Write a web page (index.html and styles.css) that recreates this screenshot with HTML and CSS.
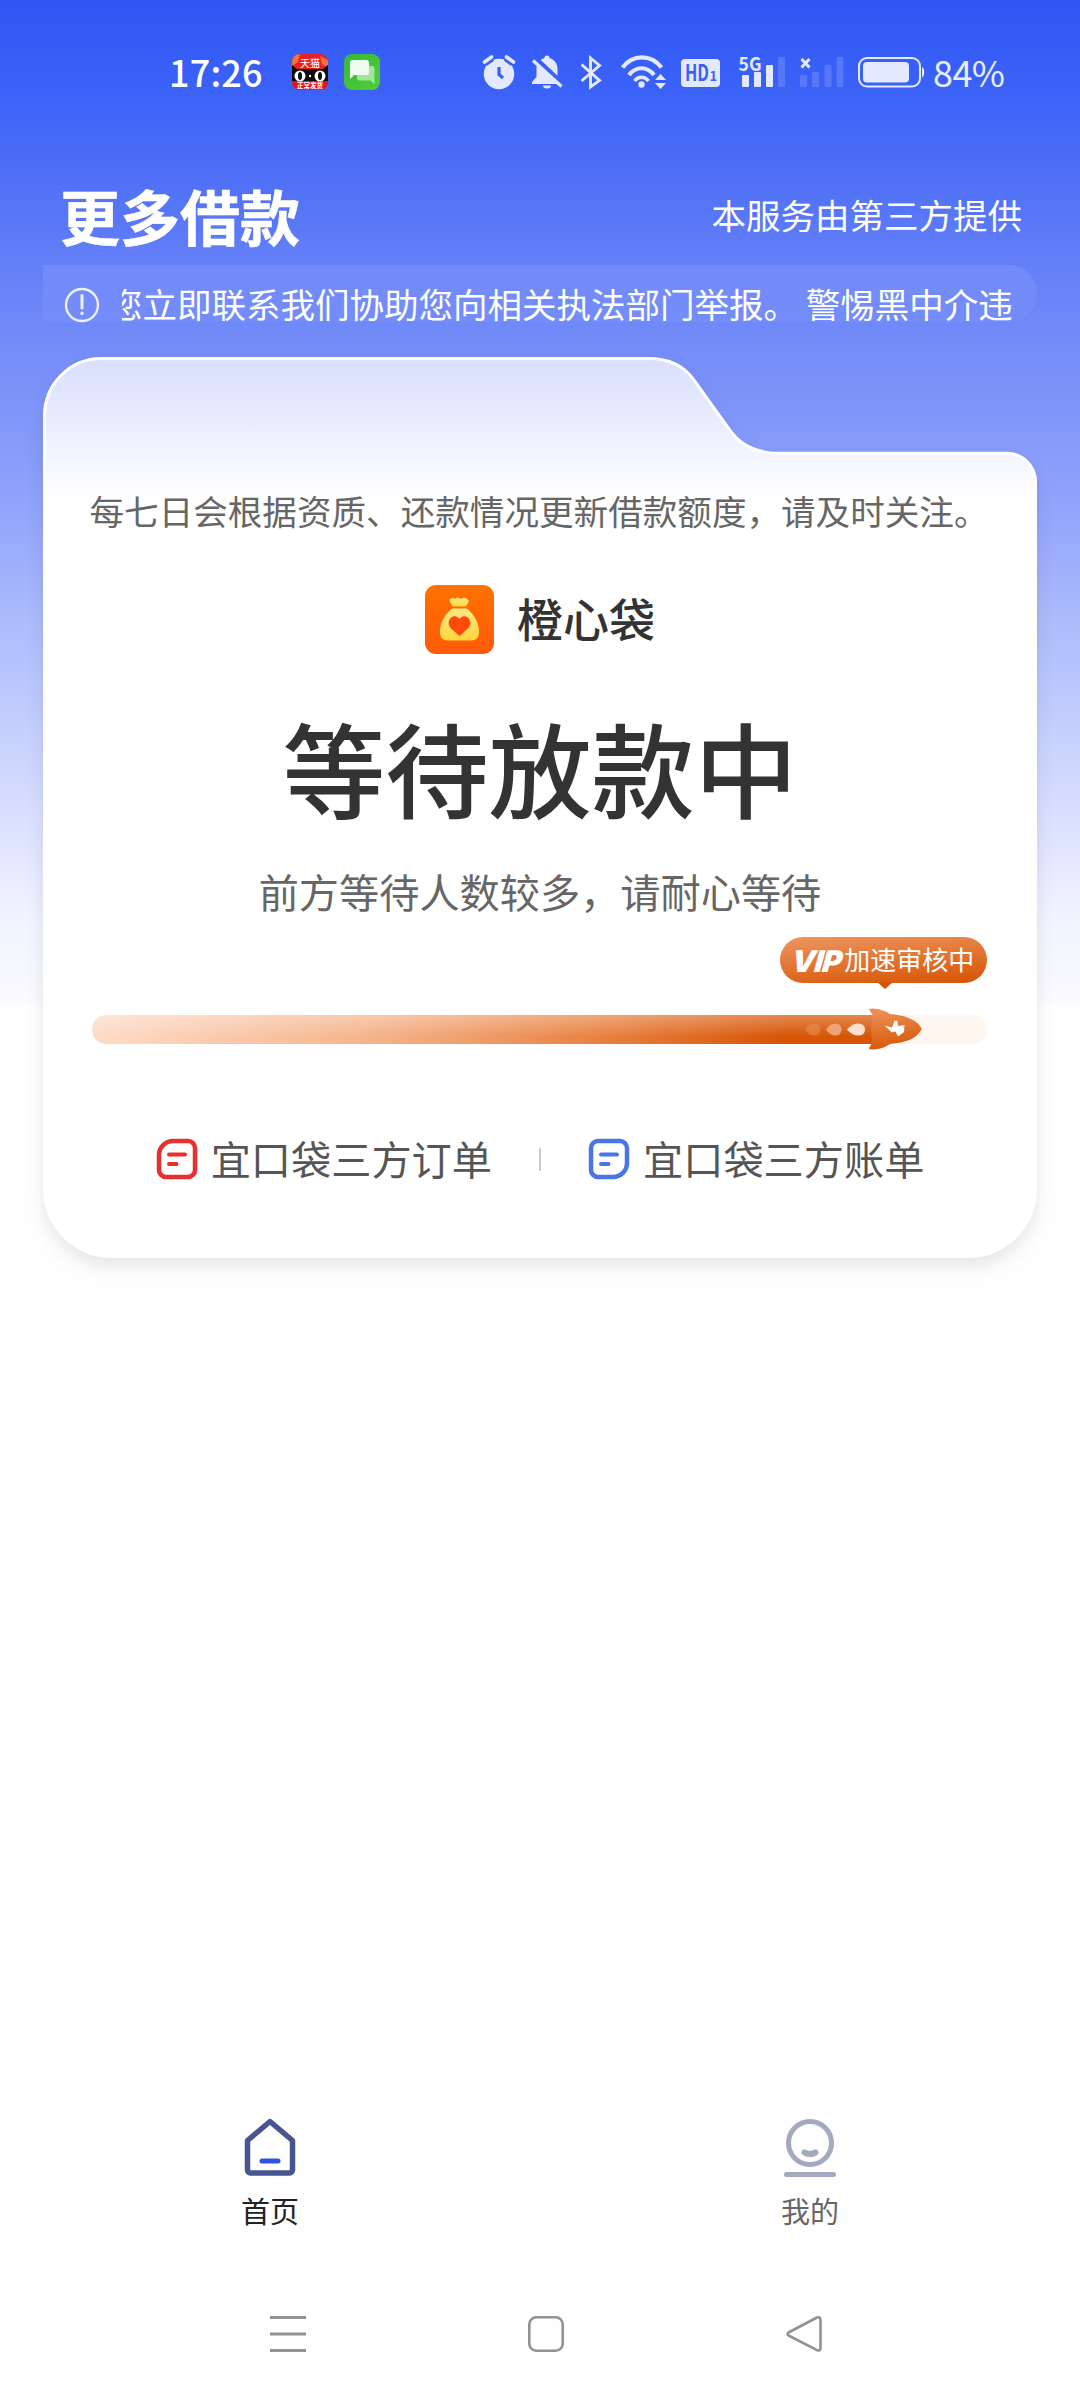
FILE: index.html
```html
<!DOCTYPE html>
<html lang="zh-CN">
<head>
<meta charset="utf-8">
<title>更多借款</title>
<link rel="stylesheet" href="styles.css">
</head>
<body>
<div class="screen">
  <header class="status">
    <span class="clock">17:26</span>
    <svg class="app-tmall" width="36" height="36" viewBox="0 0 36 36">
      <defs><clipPath id="tm"><rect width="36" height="36" rx="8"/></clipPath></defs>
      <g clip-path="url(#tm)">
        <rect width="36" height="36" fill="#e8231f"/>
        <path d="M0 0h8l-2 8-6 4zM28 2l8 4v8l-6-4z" fill="#f5703c"/>
        <path d="M0 11l5 4h26l5-4v16H0z" fill="#120b0c"/>
        <rect y="27" width="36" height="9" fill="#e3131a"/>
        <ellipse cx="8" cy="22" rx="5.500" ry="5.500" fill="#fff"/><ellipse cx="28" cy="22" rx="5.500" ry="5.500" fill="#fff"/>
        <ellipse cx="8" cy="22" rx="2" ry="4" fill="#111"/><ellipse cx="28" cy="22" rx="2" ry="4" fill="#111"/>
        <circle cx="18" cy="22" r="1.200" fill="#fff"/>
        <text x="18" y="13" text-anchor="middle" font-size="10" fill="#fff">天猫</text>
        <text x="18" y="34" text-anchor="middle" font-size="6.500" font-weight="700" fill="#fff">正常发货</text>
      </g>
    </svg>
    <svg class="app-msg" width="36" height="36" viewBox="0 0 36 36">
      <defs><linearGradient id="gm" x1="0" y1="0" x2="1" y2="1"><stop offset="0" stop-color="#35b83a"/><stop offset="1" stop-color="#4fcf35"/></linearGradient></defs>
      <rect width="36" height="36" rx="8" fill="url(#gm)"/>
      <path d="M16 12h12a2.500 2.500 0 0 1 2.500 2.500V30l-4-3.500H15.500a2.500 2.500 0 0 1-2.500-2.500v-7z" fill="#a4e3a0"/>
      <path d="M8.500 6h14A2.500 2.500 0 0 1 25 8.500v10a2.500 2.500 0 0 1-2.500 2.500H10l-4 4V8.500A2.500 2.500 0 0 1 8.500 6z" fill="#eefbee"/>
    </svg>
    <svg class="sys" width="446" height="40" viewBox="480 52 446 40" fill="#e3eaff">
      <g>
        <circle cx="499" cy="74" r="15.200"/>
        <path d="M485 63l7-5M513 63l-7-5" stroke="#3a60f6" stroke-width="7"/>
        <path d="M484.500 62l7-5M513.500 62l-7-5" stroke="#e3eaff" stroke-width="3.600" stroke-linecap="round"/>
        <path d="M499 67v7.500l4 3.500" fill="none" stroke="#3a60f6" stroke-width="3.200"/>
      </g>
      <g>
        <path d="M547 55.500c1.600 0 2.500 1 2.500 2.500 5 1.500 8 5.500 8 11v8l4.500 5v2h-30v-2l4.500-5v-8c0-5.500 3-9.500 8-11 0-1.500.9-2.500 2.500-2.500z"/>
        <path d="M543 85.500h8a4 3 0 0 1-8 0z"/>
        <path d="M535 58l30 28" stroke="#3a60f6" stroke-width="5"/>
        <path d="M533 60.500l28.500 26" stroke="#e3eaff" stroke-width="3.200"/>
      </g>
      <path d="M581.500 64.500l18 16L590.500 87V58l9 7.500-18 15.500" fill="none" stroke="#e3eaff" stroke-width="2.900"/>
      <g fill="none" stroke="#e3eaff" stroke-width="4.200">
        <path d="M622.500 67.500c10.500-13.500 28.500-13.500 39 0"/><path d="M629 75c7-9 18-9 25 0"/><path d="M634.500 81c4-5 10-5 14 0" stroke-width="3.600"/>
      </g>
      <circle cx="641.500" cy="84.500" r="3.200"/>
      <path d="M655 80l5.500-6 5.500 6zM655 83h11l-5.500 6z"/>
      <rect x="681" y="59" width="39" height="28" rx="4"/>
      <text x="685" y="81" font-size="22" font-weight="700" textLength="24" lengthAdjust="spacingAndGlyphs" fill="#3a60f6">HD</text>
      <text x="709.500" y="81" font-size="13" font-weight="700" fill="#3a60f6">1</text>
      <text x="738.500" y="70.500" font-size="19" font-weight="700" textLength="23" lengthAdjust="spacingAndGlyphs">5G</text>
      <rect x="742" y="75" width="7" height="12" rx="1"/><rect x="754" y="72" width="7" height="15" rx="1"/><rect x="766" y="65" width="7" height="22" rx="1"/>
      <g opacity=".17"><rect x="778" y="57" width="7" height="30" rx="1"/><rect x="800" y="75" width="7" height="12" rx="1"/><rect x="812" y="72" width="7" height="15" rx="1"/><rect x="824.500" y="65" width="7" height="22" rx="1"/><rect x="836.500" y="57" width="7" height="30" rx="1"/></g>
      <path d="M801.500 59l8 8.500M809.500 59l-8 8.500" stroke="#e3eaff" stroke-width="3"/>
      <rect x="859" y="58" width="61" height="28.500" rx="8" fill="none" stroke="#e3eaff" stroke-width="2"/>
      <rect x="863" y="62" width="46" height="20.500" rx="4"/>
      <path d="M922 67c3 .8 3 9.500 0 10.500z"/>
    </svg>
    <span class="pct">84%</span>
  </header>

  <div class="head">
    <h1>更多借款</h1>
    <span class="provider">本服务由第三方提供</span>
  </div>

  <div class="notice">
    <svg width="36" height="36" viewBox="0 0 36 36" fill="none" stroke="#eef1ff"><circle cx="18" cy="18" r="16" stroke-width="2.300"/><path d="M18 8.500v12.500" stroke-width="3" stroke-linecap="round"/><path d="M18 26v.6" stroke-width="3.200" stroke-linecap="round"/></svg>
    <div class="marquee"><span>您立即联系我们协助您向相关执法部门举报。 警惕黑中介违</span></div>
  </div>

  <main class="card">
    <svg class="card-bg" width="994" height="901" viewBox="0 0 994 901">
      <defs><linearGradient id="cg" gradientUnits="userSpaceOnUse" x1="0" y1="0" x2="0" y2="140"><stop offset="0" stop-color="#d9dffd"/><stop offset=".5" stop-color="#ebeefe"/><stop offset="1" stop-color="#fff"/></linearGradient></defs>
      <path d="M1.500 58.500A57 57 0 0 1 58.500 1.500H606C626 1.500 641 9 651 23L689 76C700 90 716 96.300 737 96.300H964A28.500 28.500 0 0 1 992.500 124.500V832A67.500 67.500 0 0 1 925 899.500H69A67.500 67.500 0 0 1 1.500 832Z" fill="url(#cg)" stroke="#fff" stroke-width="3"/>
    </svg>
    <p class="tip">每七日会根据资质、还款情况更新借款额度，请及时关注。</p>
    <div class="brand">
      <svg width="69" height="69" viewBox="0 0 69 69">
        <defs><linearGradient id="bo" x1="0" y1="0" x2="0" y2="1"><stop offset="0" stop-color="#ff7300"/><stop offset="1" stop-color="#ff5a08"/></linearGradient><linearGradient id="by" x1="0" y1="0" x2="0" y2="1"><stop offset="0" stop-color="#ffe884"/><stop offset="1" stop-color="#ffd53c"/></linearGradient></defs>
        <rect width="69" height="69" rx="11" fill="url(#bo)"/>
        <path d="M24.500 14.500q3-2.500 5.500-.5 2.500-3 6 0 4-3 8 1.500-.5 3-3.500 6H28q-3.500-4-3.500-7z" fill="url(#by)"/>
        <path d="M27.500 23.500h14c6 4 13 13 12.500 24-.2 5-2.500 8-8 8H23c-5.500 0-7.800-3-8-8-.5-11 6.500-20 12.500-24z" fill="url(#by)"/>
        <path d="M34.500 51L25.500 43c-6-8 4-16 9-9 5-7 15 1 9 9z" fill="#ff4a0c"/>
      </svg>
      <span>橙心袋</span>
    </div>
    <h2>等待放款中</h2>
    <p class="queue">前方等待人数较多，请耐心等待</p>
    <div class="progress">
      <div class="fill"></div>
      <svg class="rocket" width="120" height="42" viewBox="0 0 120 42">
        <defs><linearGradient id="rk" x1="0" y1="0" x2=".2" y2="1"><stop offset="0" stop-color="#ef9560"/><stop offset="1" stop-color="#d85a08"/></linearGradient></defs>
        <path d="M3 21.500q4-6 9-6 6.500 0 6.500 6t-6.500 6q-5 0-9-6z" fill="#e8905a" opacity=".55"/>
        <path d="M24 21.500q4-6 9-6 6.500 0 6.500 6t-6.500 6q-5 0-9-6z" fill="#efa277"/>
        <path d="M45 21.500q5-6 11-6 7 0 7 6t-7 6q-6 0-11-6z" fill="#fde0cd"/>
        <path d="M67 1.500Q67 .5 71 .5q10 .5 17 5.500 24 2 31 13.500 1 1.500 0 3-7 11.500-31 13.500-7 5-17 5.500-4 0-4-1.500l3.500-6q-3-13 .5-26.500-2-3-4-6z" fill="url(#rk)"/>
        <path d="M82.500 17.500L90 19.500 92.500 12.700H95.500L96 18 102.500 17 102 24 96 28.500 93.500 23.500 90 24.500z" fill="#fff"/>
      </svg>
      <div class="badge"><b>VIP</b>加速审核中</div>
    </div>
    <nav class="links">
      <a><svg width="42" height="42" viewBox="0 0 42 42" fill="none" stroke="#e83030"><path d="M17 3h15a7 7 0 0 1 7 7v22a7 7 0 0 1-7 7H10a7 7 0 0 1-7-7V17A14 14 0 0 1 17 3z" stroke-width="4.500"/><path d="M13 16.500h16M13 26h7.500" stroke-width="4" stroke-linecap="round"/></svg><span>宜口袋三方订单</span></a>
      <i></i>
      <a><svg width="42" height="42" viewBox="0 0 42 42" fill="none" stroke="#4a74e8"><path d="M10 3h22a7 7 0 0 1 7 7v15a14 14 0 0 1-14 14H10a7 7 0 0 1-7-7V10a7 7 0 0 1 7-7z" stroke-width="4.500"/><path d="M13 16.500h16M13 26h7.500" stroke-width="4" stroke-linecap="round"/></svg><span>宜口袋三方账单</span></a>
    </nav>
  </main>

  <nav class="tabs">
    <a class="on"><svg width="60" height="60" viewBox="0 0 60 60" fill="none"><path d="M30 3.500L52.500 22.500V52a3 3 0 0 1-3 3H10.500a3 3 0 0 1-3-3V22.500z" stroke="#475590" stroke-width="5.500" stroke-linejoin="round"/><path d="M22 43h16" stroke="#2f52e0" stroke-width="5" stroke-linecap="round"/></svg><span>首页</span></a>
    <a><svg width="60" height="60" viewBox="0 0 60 60" fill="none" stroke="#a3a9bf" stroke-width="5" stroke-linecap="round"><circle cx="30" cy="25" r="21.500"/><path d="M24.500 34.500q5.500 3 11 0" stroke-width="6"/><path d="M6.500 56.500h47"/></svg><span>我的</span></a>
  </nav>
  <footer class="sysnav">
    <svg width="38" height="38" viewBox="0 0 38 38" stroke="#929292" stroke-width="3"><path d="M1 2.500h36M1 19h36M1 35.500h36"/></svg>
    <svg width="38" height="38" viewBox="0 0 38 38" fill="none" stroke="#929292" stroke-width="2.600"><rect x="2.300" y="2.300" width="33.400" height="33.400" rx="7"/></svg>
    <svg width="38" height="38" viewBox="0 0 38 38" fill="none" stroke="#929292" stroke-width="2.600" stroke-linejoin="round"><path d="M3.500 17.500L32 2.500Q35.500 1.500 35.500 5V33Q35.500 36.500 32 35.200L3.500 20.500Q1.500 19 3.500 17.500z"/></svg>
  </footer>
</div>
</body>
</html>
```
FILE: styles.css
```css
* { box-sizing: border-box; margin: 0; padding: 0; }
body {
  width: 1080px;
  height: 2400px;
  overflow: hidden;
  background: #fefefe;
  font-family: "Noto Sans CJK SC", sans-serif;
}
svg { display: block; flex: none; }
.screen {
  position: relative;
  z-index: 0;
  display: flex;
  flex-direction: column;
  height: 2400px;
  background: linear-gradient(180deg, #2f56f4 0, #3b62f7 90px, #4b6df6 160px, #6480f8 265px, #758df8 350px, #90a2fb 500px, #b0bffc 640px, #d6dcfe 800px, #f1f4fe 920px, #fafaff 1004px, #fefefe 1005px) no-repeat;
}
.status {
  display: flex;
  align-items: center;
  height: 144px;
  padding-left: 169px;
  color: #fff;
}
.clock, .pct { font-size: 36px; line-height: 40px; font-weight: 500; margin-top: -3px; }
.clock { width: 123px; letter-spacing: .2px; }
.app-msg { margin-left: 16px; }
.sys { margin-left: 100px; }
.pct { margin-left: 7px; font-weight: 400; color: #e9eeff; letter-spacing: -.6px; }
.head {
  display: flex;
  justify-content: space-between;
  align-items: center;
  height: 121px;
  padding: 20px 58px 0 60px;
  color: #fff;
}
.head h1 { font-size: 60px; line-height: 60px; font-weight: 700; -webkit-text-stroke: .6px #fff; }
.provider { margin-top: -1px; font-size: 34.500px; line-height: 40px; }
.notice {
  display: flex;
  align-items: center;
  width: 994px;
  height: 57px;
  margin-left: 43px;
  padding: 22px 23px 0 21px;
  border-radius: 0 28px 28px 0;
  background: linear-gradient(180deg, rgba(255,255,255,.09), rgba(255,255,255,.03));
}
.marquee {
  width: 893px;
  height: 44px;
  margin-left: 22px;
  overflow: hidden;
  white-space: nowrap;
  color: #fff;
  font-size: 34.500px;
  line-height: 40px;
}
.marquee span { margin-left: -14px; }
.card {
  position: relative;
  display: flex;
  flex-direction: column;
  align-items: center;
  width: 994px;
  height: 901px;
  margin: 35px 0 0 43px;
}
.card-bg { position: absolute; inset: 0; z-index: -1; overflow: visible; filter: drop-shadow(0 9px 8px rgba(0,0,0,.09)); }
.tip { margin: 133px 2px 0 0; font-size: 34.600px; line-height: 40px; color: #666; white-space: nowrap; }
.brand { display: flex; align-items: center; gap: 23px; height: 69px; margin-top: 55px; font-size: 46px; line-height: 60px; font-weight: 500; color: #333; }
.brand span { margin-top: -5px; }
.card h2 { margin-top: 53px; font-size: 103px; line-height: 120px; font-weight: 500; color: #333; white-space: nowrap; }
.queue { margin-top: 39px; font-size: 40.200px; line-height: 50px; color: #666; white-space: nowrap; }
.progress { position: relative; width: 895px; height: 29px; margin: 99px 2px 0 0; border-radius: 15px; background: #fff6f0; }
.fill {
  width: 790px;
  height: 29px;
  border-radius: 15px 0 0 15px;
  background: linear-gradient(180deg, rgba(255,255,255,.3), rgba(255,255,255,0) 75%), linear-gradient(90deg, #fddcc8 0, #f5b48c 35%, #e8803f 65%, #d75505 88%);
}
.rocket { position: absolute; left: 710px; top: -7px; }
.badge {
  position: absolute;
  left: 688px;
  top: -78px;
  display: flex;
  align-items: center;
  justify-content: center;
  width: 207px;
  height: 46px;
  border-radius: 23px;
  background: linear-gradient(175deg, #ee965f, #d65302);
  color: #fff;
  font-size: 26px;
  font-weight: 400;
  line-height: 40px;
  padding-bottom: 2px;
  white-space: nowrap;
}
.badge b { margin: 3px 3px 0 0; font: italic 900 30px "Inter", sans-serif; letter-spacing: -1px; transform: skewX(-6deg); }
.badge::after {
  content: "";
  position: absolute;
  left: 97px;
  top: 45px;
  border: 8px solid transparent;
  border-top: 7px solid #d65605;
  border-bottom: 0;
}
.links { display: flex; align-items: center; margin-top: 91px; font-size: 40.200px; line-height: 50px; color: #555; }
.links a { display: flex; align-items: center; gap: 13px; white-space: nowrap; }
.links a span { margin-top: -2px; }
.links i { width: 2px; height: 23px; margin: 0 47px; background: #ccc; }
.tabs { display: flex; margin-top: 860px; font-size: 29px; line-height: 36px; color: #666; }
.tabs a { display: flex; flex: 1; flex-direction: column; align-items: center; gap: 14px; }
.tabs .on { color: #222; }
.sysnav { display: flex; justify-content: space-between; margin-top: 87px; padding: 0 257px 0 269px; }
```
